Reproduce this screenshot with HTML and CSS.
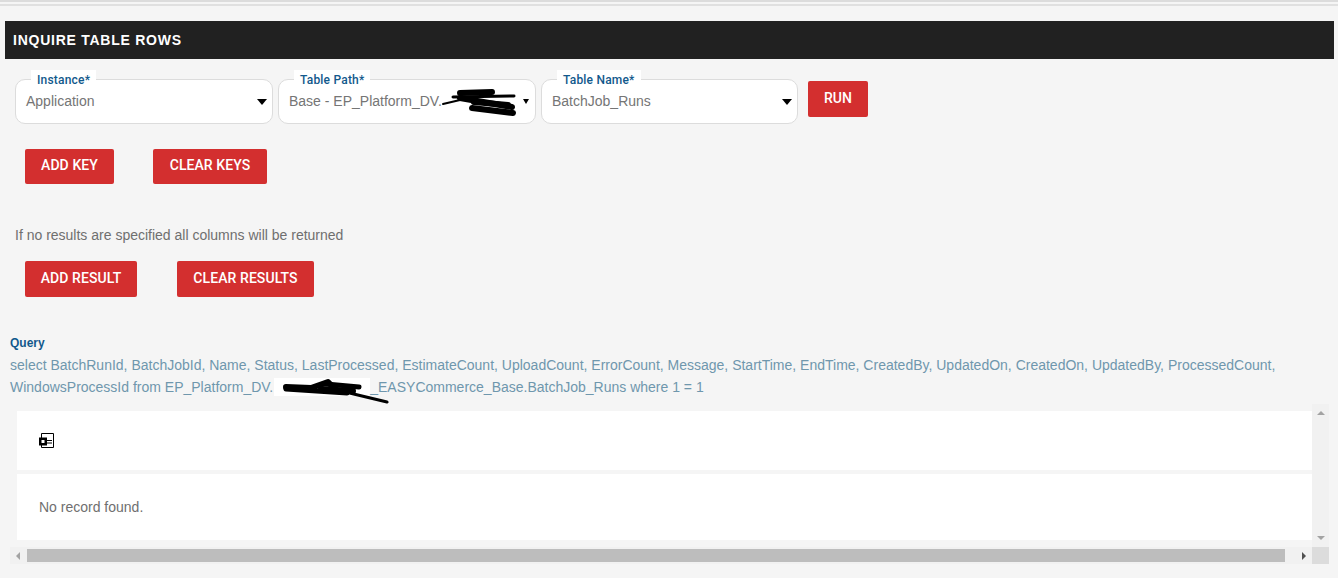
FILE: index.html
```html
<!DOCTYPE html>
<html lang="en">
<head>
<meta charset="utf-8">
<title>Inquire Table Rows</title>
<link rel="stylesheet" href="styles.css">
</head>
<body>
<div class="rule-top"></div>
<div class="rule-second"></div>
<h1 class="title">INQUIRE TABLE ROWS</h1>
<div class="fields">
  <div class="field">
    <span class="legend">Instance*</span>
    <span class="value">Application</span>
    <span class="caret"></span>
  </div>
  <div class="field">
    <span class="legend">Table Path*</span>
    <span class="value">Base - EP_Platform_DV.</span>
    <span class="caret caret-small"></span>
    <svg class="scribble scribble-path" width="84" height="32" viewBox="0 0 84 32"><g fill="none" stroke="#000" stroke-linecap="round" stroke-linejoin="round"><path d="M5 15L22 11" stroke-width="2"/><path d="M22 4L54 3" stroke-width="6"/><path d="M15 8L76 7" stroke-width="3"/><path d="M22 9L74 18" stroke-width="6"/><path d="M34 19L75 24" stroke-width="6"/><path d="M36 13L70 16" stroke-width="6"/></g></svg>
  </div>
  <div class="field field-last">
    <span class="legend">Table Name*</span>
    <span class="value">BatchJob_Runs</span>
    <span class="caret"></span>
  </div>
  <button class="btn btn-run" type="button">RUN</button>
</div>
<div class="actions actions-keys">
  <button class="btn btn-key" type="button">ADD KEY</button>
  <button class="btn btn-clear-keys" type="button">CLEAR KEYS</button>
</div>
<p class="hint">If no results are specified all columns will be returned</p>
<div class="actions actions-results">
  <button class="btn btn-result" type="button">ADD RESULT</button>
  <button class="btn btn-clear-results" type="button">CLEAR RESULTS</button>
</div>
<div class="query">
  <div class="query-label">Query</div>
  <div class="query-text">select BatchRunId, BatchJobId, Name, Status, LastProcessed, EstimateCount, UploadCount, ErrorCount, Message, StartTime, EndTime, CreatedBy, UpdatedOn, CreatedOn, UpdatedBy, ProcessedCount, WindowsProcessId from EP_Platform_DV.<span class="mask"></span>_EASYCommerce_Base.BatchJob_Runs where 1 = 1<svg class="scribble scribble-query" width="110" height="28" viewBox="0 0 110 28"><g fill="none" stroke="#000" stroke-linecap="round" stroke-linejoin="round"><path d="M5 10L30 11L47 5L50 8" stroke-width="6"/><path d="M45 7L78 10" stroke-width="5"/><path d="M5 12L66 16" stroke-width="5"/><path d="M40 12L72 14" stroke-width="6"/><path d="M56 13L106 25" stroke-width="3"/></g></svg></div>
</div>
<div class="grid-wrap">
  <div class="grid-main">
    <div class="grid-rows">
      <div class="row row-head">
        <svg class="row-icon" width="15" height="15" viewBox="0 0 15 15"><path d="M2.5 .5H14.5V14.5H2.5Z" fill="#fff" stroke="#000"/><path d="M0 4.5H8V12.5H0Z" fill="#000"/><path d="M2.5 7H5.5V10H2.5Z" fill="#fff"/><path d="M8 7.5H13M8 10H13" stroke="#000"/></svg>
      </div>
      <div class="row row-body">No record found.</div>
    </div>
    <div class="vscroll">
      <span class="arrow arrow-up"></span>
      <span class="arrow arrow-down"></span>
    </div>
  </div>
  <div class="hscroll">
    <div class="hbar">
      <span class="arrow arrow-left"></span>
      <span class="thumb"></span>
      <span class="arrow arrow-right"></span>
    </div>
    <div class="corner"></div>
  </div>
</div>
</body>
</html>
```
FILE: styles.css
```css
* { box-sizing: border-box; }
html, body { margin: 0; padding: 0; }
body {
  width: 1338px;
  height: 578px;
  overflow: hidden;
  background: #f5f5f5;
  font-family: "Liberation Sans", Arial, sans-serif;
  color: #6c757d;
  font-size: 14px;
}
.rule-top { height: 2px; background: #dcdcdc; }
.rule-second { height: 2px; margin-top: 2px; background: #e0e0e0; }
.title {
  margin: 15px 4px 0 5px;
  height: 38px;
  padding: 0 8px;
  background: #212121;
  color: #fff;
  font-size: 14px;
  font-weight: 700;
  letter-spacing: 0.75px;
  line-height: 38px;
}
.fields {
  display: flex;
  align-items: flex-start;
  margin: 20px 0 0 15px;
}
.field {
  position: relative;
  width: 258px;
  height: 45px;
  margin-right: 5px;
  background: #fff;
  border: 1px solid #dcdcdc;
  border-radius: 10px;
  padding: 13px 10px 0;
  line-height: 16px;
  color: #757575;
}
.field-last { width: 257px; margin-right: 10px; }
.legend {
  position: absolute;
  top: -10px;
  left: 15px;
  padding: 0 6px;
  height: 10px;
  background: #fff;
  color: #12598c;
  font-family: Roboto, "Liberation Sans", sans-serif;
  font-size: 12px;
  font-weight: 500;
  letter-spacing: 0.2px;
  line-height: 21px;
  white-space: nowrap;
}
.value { display: block; white-space: nowrap; }
.caret {
  position: absolute;
  right: 5px;
  top: 19px;
  width: 0;
  height: 0;
  border-left: 5px solid transparent;
  border-right: 5px solid transparent;
  border-top: 6px solid #000;
}
.caret-small {
  right: 6px;
  border-left-width: 3px;
  border-right-width: 3px;
  border-top-width: 5px;
}
.scribble { position: absolute; }
.scribble-path { left: 159px; top: 9px; }
.btn {
  display: block;
  padding: 0 0 3px;
  border: 0;
  border-radius: 2px;
  background: #d32f2f;
  color: #fff;
  font-family: Roboto, "Liberation Sans", sans-serif;
  font-size: 14px;
  font-weight: 500;
  letter-spacing: 0.08px;
  text-align: center;
}
.btn-run { width: 60px; height: 36px; margin-top: 2px; }
.actions { display: flex; margin-left: 25px; }
.actions-keys { margin-top: 25px; }
.btn-key { width: 89px; height: 35px; margin-right: 39px; }
.btn-clear-keys { width: 114px; height: 35px; }
.hint {
  margin: 43px 0 0 15px;
  line-height: 16px;
  color: #6f6f6f;
}
.actions-results { margin-top: 18px; }
.btn-result { width: 112px; height: 36px; margin-right: 40px; }
.btn-clear-results { width: 137px; height: 36px; }
.query { margin: 39px 0 0 10px; position: relative; width: 1300px; }
.query-label {
  color: #12598c;
  font-size: 12px;
  font-weight: 700;
  line-height: 14px;
}
.query-text {
  position: relative;
  margin-top: 4px;
  line-height: 22px;
  color: #6f97ad;
}
.mask {
  display: inline-block;
  width: 96px;
  height: 18px;
  margin-left: 1px;
  vertical-align: -4px;
  background: #fff;
}
.scribble-query { left: 271px; top: 23px; }
.grid-wrap { margin: 6px 0 0 10px; width: 1319px; }
.grid-main { display: flex; height: 143px; }
.grid-rows { flex: 1; padding: 7px 0 0 7px; }
.row { background: #fff; }
.row-head { height: 59px; padding: 22px 0 0 22px; }
.row-icon { display: block; }
.row-body {
  height: 66px;
  margin-top: 4px;
  padding-left: 22px;
  line-height: 66px;
  color: #6f6f6f;
}
.vscroll {
  position: relative;
  width: 17px;
  background: #f1f1f1;
}
.arrow { position: absolute; width: 0; height: 0; }
.arrow-up {
  top: 7px;
  left: 5px;
  border-left: 4px solid transparent;
  border-right: 4px solid transparent;
  border-bottom: 4px solid #a3a3a3;
}
.arrow-down {
  bottom: 7px;
  left: 5px;
  border-left: 4px solid transparent;
  border-right: 4px solid transparent;
  border-top: 4px solid #a3a3a3;
}
.hscroll { display: flex; height: 17px; }
.hbar {
  position: relative;
  flex: 1;
  background: #f1f1f1;
  padding: 2px 27px 2px 17px;
}
.thumb { display: block; height: 13px; background: #bdbdbd; }
.arrow-left {
  left: 6px;
  top: 5px;
  border-top: 4px solid transparent;
  border-bottom: 4px solid transparent;
  border-right: 4px solid #a3a3a3;
}
.arrow-right {
  right: 6px;
  top: 5px;
  border-top: 4px solid transparent;
  border-bottom: 4px solid transparent;
  border-left: 4px solid #505050;
}
.corner { width: 17px; background: #dcdcdc; }
```
